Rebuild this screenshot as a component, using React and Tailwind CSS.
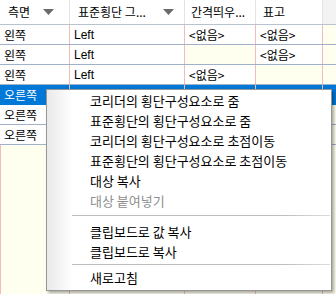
import React from 'react';

const rows = [
  { side: '왼쪽', tpl: 'Left', gap: '<없음>', elev: '<없음>' },
  { side: '왼쪽', tpl: 'Left', gap: '', elev: '<없음>' },
  { side: '왼쪽', tpl: 'Left', gap: '<없음>', elev: '' },
  { side: '오른쪽', tpl: '', gap: '', elev: '', selected: true },
  { side: '오른쪽', tpl: '', gap: '', elev: '' },
  { side: '오른쪽', tpl: '', gap: '', elev: '' },
];

const menu = [
  { label: '코리더의 횡단구성요소로 줌' },
  { label: '표준횡단의 횡단구성요소로 줌' },
  { label: '코리더의 횡단구성요소로 초점이동' },
  { label: '표준횡단의 횡단구성요소로 초점이동' },
  { label: '대상 복사' },
  { label: '대상 붙여넣기', disabled: true },
  { sep: 'big' },
  { label: '클립보드로 값 복사' },
  { label: '클립보드로 복사' },
  { sep: 'small' },
  { label: '새로고침' },
];

const Arrow = () => (
  <svg width="11" height="6" viewBox="0 0 11 6" className="shrink-0">
    <path d="M0 0 H11 L5.5 6 Z" fill="#6b6b6b" />
  </svg>
);

const Cell = ({ text, width, selected, blank }) => {
  const empty = text === '' && !blank;
  return (
    <div
      className={`${width} h-full flex items-center px-[4px] border-r border-[#f3bcbc] ${
        selected ? 'bg-[#0078d7] text-white' : empty ? 'bg-[#fffff0]' : 'bg-white'
      }`}
    >
      <span className="whitespace-nowrap">{text}</span>
    </div>
  );
};

const App = () => {
  return (
    <div className="relative w-[336px] h-[294px] overflow-hidden bg-[#fffff0] text-[12px] text-black font-['Liberation_Sans','Noto_Sans_CJK_KR',sans-serif]">
      {/* header */}
      <div className="flex h-[25px] bg-white border-b border-[#b8c3d0] font-['Noto_Sans_CJK_KR',sans-serif]">
        <div className="w-[70px] flex items-center justify-between pl-[8px] pr-[15px] border-r border-[#e3e3e3]">
          <span>측면</span>
          <Arrow />
        </div>
        <div className="w-[115px] flex items-center justify-between pl-[8px] pr-[10px] border-r border-[#e3e3e3]">
          <span className="whitespace-nowrap">표준횡단 그...</span>
          <Arrow />
        </div>
        <div className="w-[71px] flex items-center pl-[6px] border-r border-[#e3e3e3]">
          <span className="whitespace-nowrap">간격띄우...</span>
        </div>
        <div className="w-[67px] flex items-center pl-[7px] border-r border-[#e3e3e3]">
          <span>표고</span>
        </div>
        <div className="flex-1 bg-[#f3f3f3]" />
      </div>

      {/* rows */}
      {rows.map((r, i) => (
        <div
          key={i}
          className={`flex h-[20px] border-b ${r.selected ? 'border-[#0078d7]' : 'border-[#9fb2c9]'} font-['Noto_Sans_CJK_KR',sans-serif]`}
        >
          <Cell text={r.side} width="w-[70px]" selected={r.selected} />
          <div
            className={`w-[115px] h-full flex items-center px-[4px] border-r border-[#f3bcbc] font-['Liberation_Sans',sans-serif] ${
              r.selected ? 'bg-[#0078d7] text-white' : 'bg-white'
            }`}
          >
            {r.tpl}
          </div>
          <Cell text={r.gap} width="w-[71px]" selected={r.selected} blank={i > 2} />
          <Cell text={r.elev} width="w-[67px]" selected={r.selected} blank={i > 2} />
          <div className={`flex-1 h-full ${r.selected ? 'bg-[#0078d7]' : 'bg-[#fffff0]'}`} />
        </div>
      ))}

      {/* empty grid area */}
      <div className="flex h-[150px] border-l border-[#f3bcbc]">
        <div className="w-[69px] border-r border-[#f3bcbc]" />
        <div className="w-[115px] border-r border-[#f3bcbc]" />
        <div className="w-[71px] border-r border-[#f3bcbc]" />
        <div className="w-[67px] border-r border-[#f3bcbc]" />
      </div>

      {/* context menu */}
      <div className="absolute left-[46px] top-[89px] w-[286px] border border-[#979797] bg-[linear-gradient(90deg,#e9e9e9,#ffffff_25px)] pt-[1px] pb-[2px] shadow-[2px_2px_3px_rgba(0,0,0,0.35)] text-[13px] font-['Noto_Sans_CJK_KR',sans-serif]">
        {menu.map((m, i) =>
          m.sep ? (
            <div key={i} className={m.sep === 'big' ? 'pt-[4px] pb-[6px]' : 'pt-[2px] pb-[3px]'}>
              <div className="ml-[25px] mr-[1px] h-px bg-[linear-gradient(90deg,#bcbcbc,#bcbcbc_80%,#dcdcdc)]" />
            </div>
          ) : (
            <div
              key={i}
              className={`h-[20px] leading-[20px] pl-[43px] whitespace-nowrap ${m.disabled ? 'text-[#8d8d8d]' : 'text-black'}`}
            >
              {m.label}
            </div>
          )
        )}
      </div>
    </div>
  );
};

export default App;
